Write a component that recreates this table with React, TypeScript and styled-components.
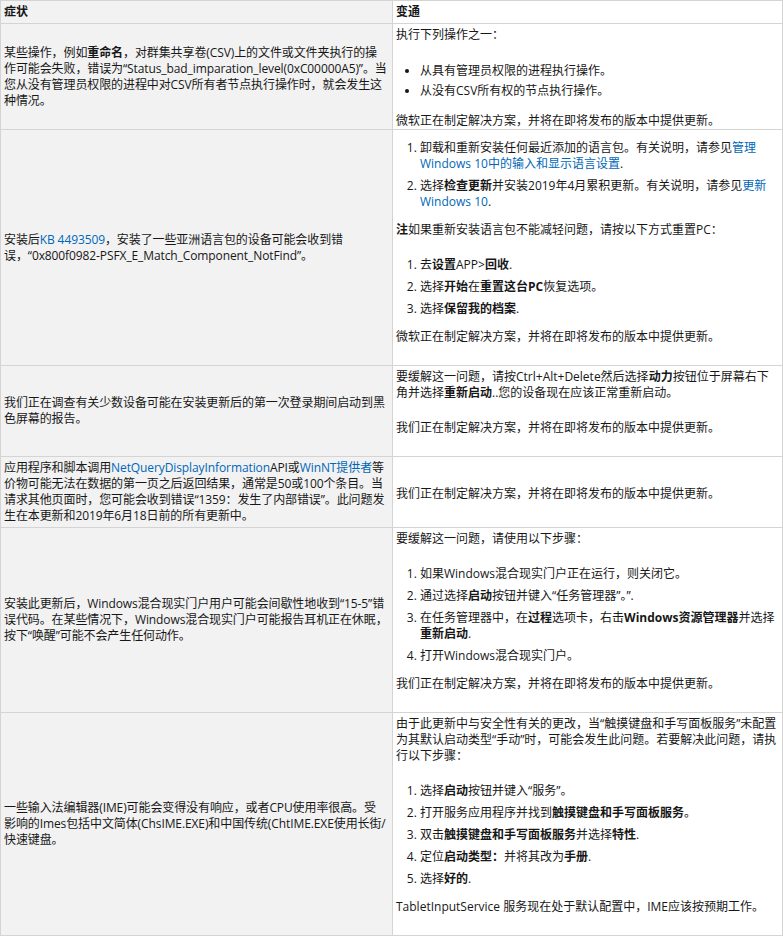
import React from "react";
import styled, { createGlobalStyle } from "styled-components";

const GlobalStyle = createGlobalStyle`
  html, body {
    margin: 0;
    padding: 0;
    background: #ffffff;
  }
  body {
    font-family: "Open Sans", "Noto Sans CJK SC", sans-serif;
    font-size: 12px;
    line-height: 16px;
    color: #171717;
  }
`;

const Table = styled.table`
  width: 783px;
  table-layout: fixed;
  border-spacing: 0;
  border-top: 1px solid #d4d4d4;
  border-left: 1px solid #d4d4d4;
`;

const HeadCell = styled.th<{ $side: "symptom" | "fix" }>`
  box-sizing: border-box;
  width: ${(p) => (p.$side === "symptom" ? "392px" : "auto")};
  padding: 3px;
  text-align: left;
  font-weight: 700;
  background: ${(p) => (p.$side === "symptom" ? "#f2f2f2" : "#ffffff")};
  border-right: 1px solid #d4d4d4;
  border-bottom: 1px solid #d4d4d4;
`;

// symptom text is a touch tighter so it wraps where the Segoe UI original does
const Cell = styled.td<{ $side: "symptom" | "fix" }>`
  box-sizing: border-box;
  vertical-align: middle;
  padding: ${(p) => (p.$side === "symptom" ? "3px 4px 3px 3px" : "3px 3px 0 3px")};
  letter-spacing: ${(p) => (p.$side === "symptom" ? "-0.1px" : "normal")};
  background: ${(p) => (p.$side === "symptom" ? "#f2f2f2" : "#ffffff")};
  border-right: 1px solid #d4d4d4;
  border-bottom: 1px solid #d4d4d4;
`;

const FixBody = styled.div<{ $flush?: boolean }>`
  display: flow-root;

  & > p,
  & > ol,
  & > ul {
    margin: 0;
  }
  & > p + p,
  & > p + ol {
    margin-top: 19px;
  }
  & > p + ul {
    margin-top: 20px;
  }
  & > ol + p {
    margin-top: 12px;
  }
  & > ul + p {
    margin-top: 14px;
  }
  & > ol:first-child {
    margin-top: 7px;
  }
  & > :last-child {
    margin-bottom: ${(p) => (p.$flush ? 0 : 20)}px;
  }
`;

const Para = styled.p``;

const Steps = styled.ol`
  padding-left: 24px;
  & > li + li {
    margin-top: 6px;
  }
`;

const Bullets = styled.ul`
  padding-left: 24px;
  & > li + li {
    margin-top: 4px;
  }
`;

const Link = styled.a`
  color: #0067b8;
  text-decoration: none;
`;

const B = styled.strong`
  font-weight: 700;
`;

const SOON = "微软正在制定解决方案，并将在即将发布的版本中提供更新。";
const WORKING = "我们正在制定解决方案，并将在即将发布的版本中提供更新。";

const App = () => {
  return (
    <>
      <GlobalStyle />
      <Table>
        <thead>
          <tr>
            <HeadCell $side="symptom">症状</HeadCell>
            <HeadCell $side="fix">变通</HeadCell>
          </tr>
        </thead>
        <tbody>
          <tr>
            <Cell $side="symptom">
              某些操作，例如<B>重命名</B>，对群集共享卷(CSV)上的文件或文件夹执行的操作可能会失败，错误为“Status_bad_imparation_level(0xC00000A5)”。当您从没有管理员权限的进程中对CSV所有者节点执行操作时，就会发生这种情况。
            </Cell>
            <Cell $side="fix">
              <FixBody $flush>
                <Para>执行下列操作之一：</Para>
                <Bullets>
                  <li>从具有管理员权限的进程执行操作。</li>
                  <li>从没有CSV所有权的节点执行操作。</li>
                </Bullets>
                <Para>{SOON}</Para>
              </FixBody>
            </Cell>
          </tr>
          <tr>
            <Cell $side="symptom">
              安装后<Link href="#">KB 4493509</Link>，安装了一些亚洲语言包的设备可能会收到错误，“0x800f0982-PSFX_E_Match_Component_NotFind”。
            </Cell>
            <Cell $side="fix">
              <FixBody>
                <Steps>
                  <li>
                    卸载和重新安装任何最近添加的语言包。有关说明，请参见
                    <Link href="#">管理Windows 10中的输入和显示语言设置</Link>.
                  </li>
                  <li>
                    选择<B>检查更新</B>并安装2019年4月累积更新。有关说明，请参见
                    <Link href="#">更新Windows 10</Link>.
                  </li>
                </Steps>
                <Para>
                  <B>注</B>如果重新安装语言包不能减轻问题，请按以下方式重置PC：
                </Para>
                <Steps>
                  <li>
                    去<B>设置</B>APP&gt;<B>回收</B>.
                  </li>
                  <li>
                    选择<B>开始</B>在<B>重置这台PC</B>恢复选项。
                  </li>
                  <li>
                    选择<B>保留我的档案</B>.
                  </li>
                </Steps>
                <Para>{SOON}</Para>
              </FixBody>
            </Cell>
          </tr>
          <tr>
            <Cell $side="symptom">
              我们正在调查有关少数设备可能在安装更新后的第一次登录期间启动到黑色屏幕的报告。
            </Cell>
            <Cell $side="fix">
              <FixBody>
                <Para>
                  要缓解这一问题，请按Ctrl+Alt+Delete然后选择<B>动力</B>按钮位于屏幕右下角并选择<B>重新启动</B>..您的设备现在应该正常重新启动。
                </Para>
                <Para>{WORKING}</Para>
              </FixBody>
            </Cell>
          </tr>
          <tr>
            <Cell $side="symptom">
              应用程序和脚本调用<Link href="#">NetQueryDisplayInformation</Link>API或
              <Link href="#">WinNT提供者</Link>等价物可能无法在数据的第一页之后返回结果，通常是50或100个条目。当请求其他页面时，您可能会收到错误“1359：发生了内部错误”。此问题发生在本更新和2019年6月18日前的所有更新中。
            </Cell>
            <Cell $side="fix">
              <FixBody $flush>
                <Para>{WORKING}</Para>
              </FixBody>
            </Cell>
          </tr>
          <tr>
            <Cell $side="symptom">
              安装此更新后，Windows混合现实门户用户可能会间歇性地收到“15-5”错误代码。在某些情况下，Windows混合现实门户可能报告耳机正在休眠，按下“唤醒”可能不会产生任何动作。
            </Cell>
            <Cell $side="fix">
              <FixBody>
                <Para>要缓解这一问题，请使用以下步骤：</Para>
                <Steps>
                  <li>如果Windows混合现实门户正在运行，则关闭它。</li>
                  <li>
                    通过选择<B>启动</B>按钮并键入“任务管理器”。”.
                  </li>
                  <li>
                    在任务管理器中，在<B>过程</B>选项卡，右击<B>Windows资源管理器</B>并选择
                    <B>重新启动</B>.
                  </li>
                  <li>打开Windows混合现实门户。</li>
                </Steps>
                <Para>{WORKING}</Para>
              </FixBody>
            </Cell>
          </tr>
          <tr>
            <Cell $side="symptom">
              一些输入法编辑器(IME)可能会变得没有响应，或者CPU使用率很高。受
              <br />
              影响的Imes包括中文简体(ChsIME.EXE)和中国传统(ChtIME.EXE使用长街/
              <br />
              快速键盘。
            </Cell>
            <Cell $side="fix">
              <FixBody>
                <Para>
                  由于此更新中与安全性有关的更改，当“触摸键盘和手写面板服务”未配置为其默认启动类型“手动”时，可能会发生此问题。若要解决此问题，请执行以下步骤：
                </Para>
                <Steps>
                  <li>
                    选择<B>启动</B>按钮并键入“服务”。
                  </li>
                  <li>
                    打开服务应用程序并找到<B>触摸键盘和手写面板服务</B>。
                  </li>
                  <li>
                    双击<B>触摸键盘和手写面板服务</B>并选择<B>特性</B>.
                  </li>
                  <li>
                    定位<B>启动类型：</B>并将其改为<B>手册</B>.
                  </li>
                  <li>
                    选择<B>好的</B>.
                  </li>
                </Steps>
                <Para>TabletInputService 服务现在处于默认配置中，IME应该按预期工作。</Para>
              </FixBody>
            </Cell>
          </tr>
        </tbody>
      </Table>
    </>
  );
};

export default App;
